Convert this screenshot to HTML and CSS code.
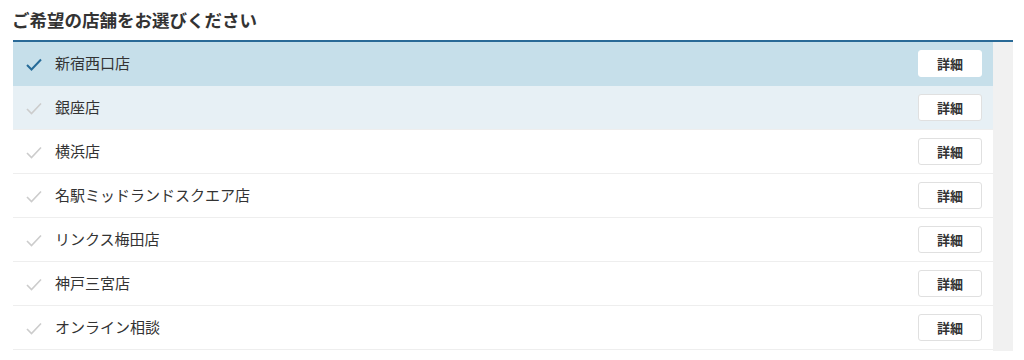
FILE: index.html
```html
<!DOCTYPE html>
<html lang="ja">
<head>
<meta charset="utf-8">
<link rel="stylesheet" href="styles.css">
</head>
<body>
<div class="page">
  <h2 class="title">ご希望の店舗をお選びください</h2>
  <div class="panel">
    <ul class="list">
      <li class="row selected"><span class="check"><svg viewBox="0 0 18 18" width="18" height="18"><path d="M2 10 L6.5 14.5 L16 4.5" fill="none" stroke="currentColor" stroke-width="2"/></svg></span><span class="name">新宿西口店</span><button class="btn">詳細</button></li>
      <li class="row hover"><span class="check"><svg viewBox="0 0 18 18" width="18" height="18"><path d="M2 10 L6.5 14.5 L16 4.5" fill="none" stroke="currentColor" stroke-width="1.6"/></svg></span><span class="name">銀座店</span><button class="btn">詳細</button></li>
      <li class="row"><span class="check"><svg viewBox="0 0 18 18" width="18" height="18"><path d="M2 10 L6.5 14.5 L16 4.5" fill="none" stroke="currentColor" stroke-width="1.6"/></svg></span><span class="name">横浜店</span><button class="btn">詳細</button></li>
      <li class="row"><span class="check"><svg viewBox="0 0 18 18" width="18" height="18"><path d="M2 10 L6.5 14.5 L16 4.5" fill="none" stroke="currentColor" stroke-width="1.6"/></svg></span><span class="name">名駅ミッドランドスクエア店</span><button class="btn">詳細</button></li>
      <li class="row"><span class="check"><svg viewBox="0 0 18 18" width="18" height="18"><path d="M2 10 L6.5 14.5 L16 4.5" fill="none" stroke="currentColor" stroke-width="1.6"/></svg></span><span class="name">リンクス梅田店</span><button class="btn">詳細</button></li>
      <li class="row"><span class="check"><svg viewBox="0 0 18 18" width="18" height="18"><path d="M2 10 L6.5 14.5 L16 4.5" fill="none" stroke="currentColor" stroke-width="1.6"/></svg></span><span class="name">神戸三宮店</span><button class="btn">詳細</button></li>
      <li class="row"><span class="check"><svg viewBox="0 0 18 18" width="18" height="18"><path d="M2 10 L6.5 14.5 L16 4.5" fill="none" stroke="currentColor" stroke-width="1.6"/></svg></span><span class="name">オンライン相談</span><button class="btn">詳細</button></li>
    </ul>
    <div class="track"></div>
  </div>
</div>
</body>
</html>
```
FILE: styles.css
```css
html, body {
  margin: 0;
  padding: 0;
  background: #fff;
}
body {
  font-family: "Noto Sans CJK JP", "Noto Sans", sans-serif;
  color: #333;
}
.page {
  padding: 6px 11px 0 13px;
}
.title {
  margin: 0 0 0 -1px;
  font-size: 17.5px;
  font-weight: 700;
  line-height: 28px;
  height: 34px;
  color: #333;
}
.panel {
  display: flex;
  border-top: 2px solid #2a6a97;
  height: 309px;
}
.list {
  list-style: none;
  margin: 0;
  padding: 0;
  width: 980px;
  flex: none;
}
.row {
  display: flex;
  align-items: center;
  height: 43px;
  border-bottom: 1px solid #eeeeee;
  padding: 0 11px 0 12px;
  background: #fff;
}
.row.selected {
  background: #c6dfea;
  border-bottom-color: #c6dfea;
}
.row.hover {
  background: #e7f0f5;
}
.check {
  width: 18px;
  height: 18px;
  color: #cccccc;
  display: flex;
}
.selected .check {
  color: #266b98;
}
.name {
  flex: 1;
  margin-left: 12px;
  font-size: 15px;
  line-height: 20px;
  padding-bottom: 2px;
  color: #333;
}
.btn {
  width: 64px;
  height: 27px;
  background: #fff;
  border: 1px solid #e0e0e0;
  border-radius: 3px;
  font-family: inherit;
  font-size: 13px;
  font-weight: 700;
  color: #333;
  padding: 0;
}
.selected .btn {
  border-color: #fff;
}
.track {
  flex: 1;
  background: #f1f1f1;
}
```
